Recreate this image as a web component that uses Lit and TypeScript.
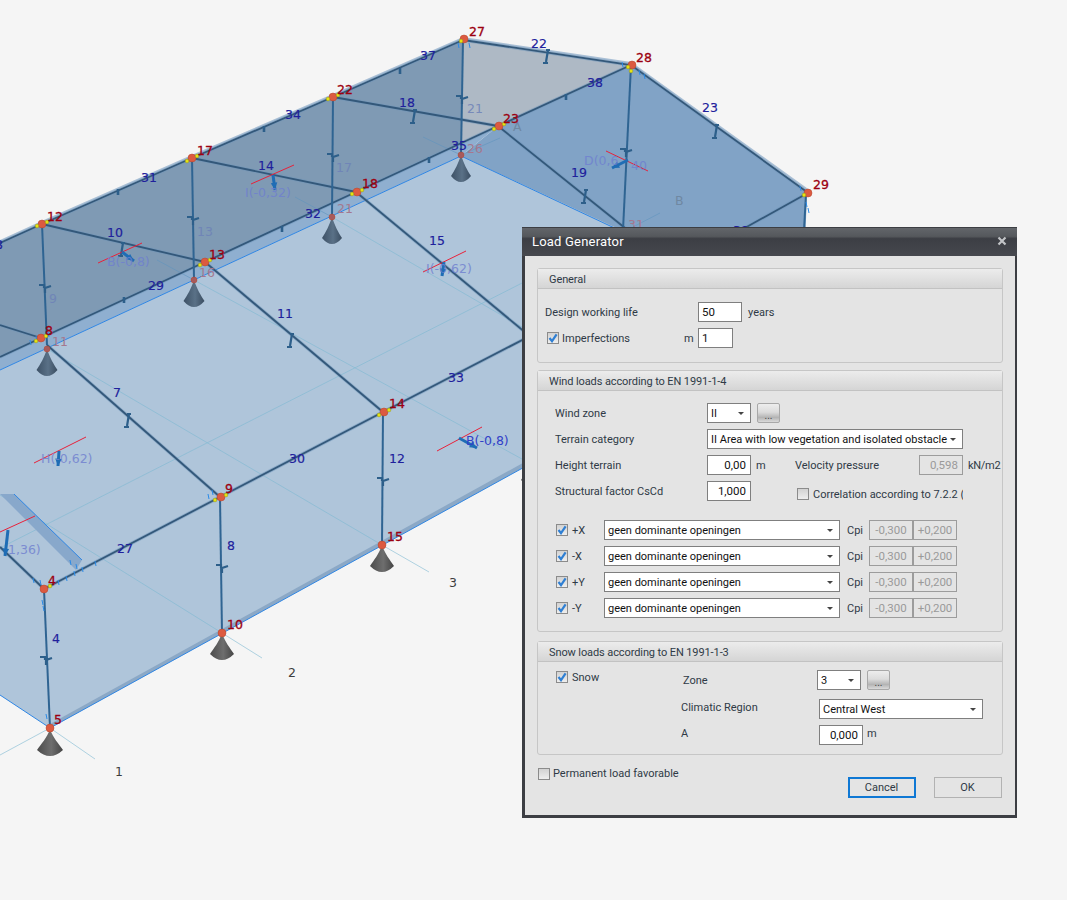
import { LitElement, css, html, svg } from "lit";
import { customElement } from "lit/decorators.js";

type P = [number, number];
type Label = [string, number, number];

const line = (pts: P[]) => pts.map((p) => p.join(",")).join(" ");

const gridLines: P[][] = [
  [[0, 755], [50, 728], [95, 759]],
  [[0, 495], [222, 633], [262, 658]],
  [[47, 349], [382, 545], [429, 572]],
  [[194, 280], [522, 459]],
  [[332, 217], [522, 327]],
  [[0, 548], [530, 279]],
];
const wallGrid: P[][] = [
  [[423, 137], [461, 155], [500, 138]],
  [[295, 197], [332, 217]],
  [[157, 260], [194, 280]],
  [[660, 213], [633, 227]],
];

const beams: P[][] = [
  [[463, 40], [333, 97], [192, 158], [42, 224], [0, 243]],
  [[0, 357], [41, 338], [205, 262], [356, 192], [498, 126], [631, 65]],
  [[42, 224], [205, 262]],
  [[192, 158], [356, 192]],
  [[333, 97], [498, 126]],
  [[463, 40], [631, 65], [807, 192]],
  [[47, 345], [220, 497]],
  [[205, 262], [383, 412]],
  [[356, 192], [532, 338]],
  [[498, 126], [630, 232]],
  [[0, 325], [41, 338]],
  [[0, 547], [44, 589]],
  [[44, 589], [220, 497], [383, 412], [530, 336]],
  [[806, 194], [743, 229]],
];

const columns: P[][] = [
  [[42, 224], [47, 345]],
  [[192, 158], [194, 280]],
  [[333, 97], [332, 217]],
  [[463, 40], [461, 155]],
  [[631, 65], [623, 230]],
  [[806, 194], [804, 230]],
  [[44, 589], [50, 728]],
  [[220, 497], [222, 633]],
  [[383, 412], [382, 545]],
];

const flatMarks: P[] = [[45, 287], [193, 219], [333, 156], [462, 98], [626, 151], [46, 659], [222, 567], [383, 480]];
const uprightMarks: P[] = [[122, 250], [291, 341], [128, 421], [414, 117], [547, 57], [716, 132], [585, 197]];
const smallMarks: P[] = [[124, 300], [264, 129], [400, 71], [282, 229], [429, 160], [118, 192], [566, 97]];

const loads: { red: [P, P]; from: P; to: P }[] = [
  { red: [[98, 263], [142, 243]], from: [122, 252], to: [134, 261] },
  { red: [[251, 184], [294, 165]], from: [273, 175], to: [275, 190] },
  { red: [[423, 272], [466, 251]], from: [444, 262], to: [442, 276] },
  { red: [[34, 463], [86, 437]], from: [59, 451], to: [58, 466] },
  { red: [[437, 451], [482, 427]], from: [459, 438], to: [477, 448] },
  { red: [[606, 151], [648, 171]], from: [628, 160], to: [612, 168] },
  { red: [[0, 532], [35, 516]], from: [8, 530], to: [5, 556] },
];

const supports: { at: P; tone: string; hw: number }[] = [
  { at: [50, 729], tone: "gray", hw: 13 },
  { at: [222, 633], tone: "gray", hw: 12 },
  { at: [382, 545], tone: "gray", hw: 12 },
  { at: [533, 459], tone: "gray", hw: 12 },
  { at: [47, 349], tone: "slate", hw: 10.5 },
  { at: [194, 280], tone: "slate", hw: 10.5 },
  { at: [332, 217], tone: "slate", hw: 10 },
  { at: [461, 155], tone: "slate", hw: 10 },
];

const nodes: { at: P; dots: P[] }[] = [
  { at: [464, 39], dots: [[461, 41]] },
  { at: [632, 65], dots: [[628, 67], [631, 71]] },
  { at: [808, 193], dots: [[804, 195]] },
  { at: [333, 97], dots: [[328, 99], [338, 95]] },
  { at: [499, 126], dots: [[494, 129], [504, 124]] },
  { at: [192, 158], dots: [[187, 161], [197, 156]] },
  { at: [357, 192], dots: [[352, 194], [362, 190]] },
  { at: [42, 224], dots: [[37, 226], [47, 222]] },
  { at: [205, 262], dots: [[200, 265], [210, 260]] },
  { at: [41, 338], dots: [[36, 341], [46, 336]] },
  { at: [384, 412], dots: [[379, 415], [389, 410]] },
  { at: [221, 497], dots: [[215, 500], [226, 495]] },
  { at: [44, 589], dots: [[50, 586]] },
  { at: [50, 728], dots: [] },
  { at: [222, 633], dots: [] },
  { at: [382, 545], dots: [] },
];

const hatches: P[] = [[30, 340], [36, 336], [48, 332], [33, 578], [40, 580], [58, 580], [66, 576], [74, 571], [82, 567], [95, 561], [70, 560], [76, 564], [42, 600], [43, 606], [46, 714], [212, 490], [208, 494], [458, 43], [469, 43], [622, 62], [639, 70], [644, 74], [800, 186], [806, 202], [808, 208]];

const nodeLabels: Label[] = [
  ["27", 469, 36], ["28", 636, 62], ["29", 813, 189], ["22", 337, 94], ["23", 503, 123], ["17", 197, 155],
  ["18", 362, 188], ["12", 47, 221], ["13", 209, 259], ["8", 45, 335], ["14", 389, 408], ["9", 225, 493],
  ["4", 48, 585], ["5", 54, 724], ["10", 227, 629], ["15", 387, 541],
];
const memberLabels: Label[] = [
  ["37", 420, 60], ["22", 531, 48], ["38", 587, 87], ["23", 702, 112], ["18", 399, 107], ["34", 285, 119],
  ["31", 141, 182], ["14", 258, 170], ["10", 107, 237], ["29", 148, 290], ["19", 571, 177], ["35", 451, 150],
  ["32", 305, 218], ["15", 429, 245], ["11", 277, 318], ["33", 448, 382], ["7", 113, 397], ["30", 289, 463],
  ["12", 389, 463], ["27", 117, 553], ["8", 227, 550], ["4", 52, 643], ["39", 733, 235], ["28", -13, 249],
];
const fadedLabels: Label[] = [["21", 467, 113], ["17", 336, 172], ["13", 197, 236], ["9", 49, 303]];
const pinkLabels: Label[] = [["26", 467, 153], ["21", 337, 213], ["16", 199, 277], ["11", 52, 346], ["31", 628, 229]];
const loadLabels: Label[] = [
  ["B(-0,8)", 107, 266], ["I(-0,32)", 245, 197], ["I(-0,62)", 426, 273], ["H(-0,62)", 41, 463],
  ["D(0,6", 584, 165], ["40", 631, 170], ["1,36)", 8, 554],
];
const axisLabels: Label[] = [["1", 115, 776], ["2", 288, 677], ["3", 449, 587]];
const planeLabels: Label[] = [["A", 513, 131], ["B", 675, 205]];

const texts = (items: Label[], cls: string) =>
  items.map(([t, x, y]) => svg`<text class=${cls} x=${x} y=${y}>${t}</text>`);

const openingRows = ["+X", "-X", "+Y", "-Y"];

@customElement("app-root")
export class AppRoot extends LitElement {
  arrowHead(from: P, to: P) {
    const a = Math.atan2(to[1] - from[1], to[0] - from[0]);
    const side = (d: number) => `${to[0] - 8 * Math.cos(a + d)},${to[1] - 8 * Math.sin(a + d)}`;
    return svg`<polygon fill="#1f6db5" points="${to.join(",")} ${side(0.42)} ${side(-0.42)}" />`;
  }

  renderModel() {
    return svg`
      <svg class="model" width="1067" height="900" viewBox="0 0 1067 900">
        <defs>
          <linearGradient id="gray" x1="0" x2="1" y1="0" y2="0">
            <stop offset="0" stop-color="#4b4b4b" />
            <stop offset="0.55" stop-color="#6e6e6e" />
            <stop offset="1" stop-color="#444" />
          </linearGradient>
          <linearGradient id="slate" x1="0" x2="1" y1="0" y2="0">
            <stop offset="0" stop-color="#3d5166" />
            <stop offset="0.55" stop-color="#5a7187" />
            <stop offset="1" stop-color="#3a4d61" />
          </linearGradient>
        </defs>

        <polygon fill="#afc5da" points="0,370 461,156 800,312 50,728 0,695" />
        ${gridLines.map((g) => svg`<polyline class="grid" points=${line(g)} />`)}
        <polygon fill="#8ba8c6" points="50,724 530,459 530,464 50,728" />
        <polyline class="edge" points="50,728 530,464" />
        <polyline class="edge" points="0,695 50,728" />

        <polygon fill="#81a3c6" points="631,65 807,192 803,300 612,226 461,156 498,126" />
        <polygon fill="#aeb9c5" points="463,40 631,65 498,126 461,144" />
        <polygon fill="#7f9ab4" points="0,243 42,224 192,158 333,97 463,40 461,144 0,357" />
        <polygon fill="#8fafd0" points="0,357 498,126 461,156 0,370" />
        <polyline class="edge" points="0,370 461,156 640,240" />
        <polyline class="rim" points="0,241 42,222 192,156 333,95 463,38 631,63 808,190" />
        ${wallGrid.map((g) => svg`<polyline class="grid dim" points=${line(g)} />`)}

        <polygon fill="#88a8cb" points="0,494 14,494 82,560 76,570" />
        <polyline class="edge" points="14,494 82,560" />

        ${beams.map((b) => svg`<polyline class="halo" points=${line(b)} />`)}
        ${beams.map((b) => svg`<polyline class="beam" points=${line(b)} />`)}
        ${columns.map((b) => svg`<polyline class="column" points=${line(b)} />`)}

        ${flatMarks.map(([x, y]) => svg`<path class="mark" d="M${x - 6} ${y - 2}h5v3M${x + 6} ${y - 1}l-6 2v5" />`)}
        ${uprightMarks.map(([x, y]) => svg`<path class="mark" d="M${x - 1} ${y - 7}h4M${x + 1} ${y - 7}l-2 12M${x - 4} ${y + 6}h5" />`)}
        ${smallMarks.map(([x, y]) => svg`<path class="mark thin" d="M${x} ${y - 3}v6" />`)}
        ${hatches.map(([x, y]) => svg`<path class="hatch" d="M${x} ${y}l1 5" />`)}

        ${supports.map(({ at: [x, y], tone, hw }) => svg`
          <path fill="url(#${tone})" d="M${x} ${y}C${x + 3} ${y + 9} ${x + hw - 4} ${y + 15} ${x + hw} ${y + 21}Q${x} ${y + 33} ${x - hw} ${y + 21}C${x - hw + 4} ${y + 15} ${x - 3} ${y + 9} ${x} ${y}Z" />
          <circle class=${tone === "gray" ? "node" : "node muted"} cx=${x} cy=${y} r="3" />
        `)}

        ${loads.map((l) => svg`
          <polyline class="red" points=${line(l.red)} />
          <line class="arrow" x1=${l.from[0]} y1=${l.from[1]} x2=${l.to[0]} y2=${l.to[1]} />
          ${this.arrowHead(l.from, l.to)}
        `)}

        ${nodes.map((n) => svg`
          <circle class="node" cx=${n.at[0]} cy=${n.at[1]} r="4" />
          ${n.dots.map(([x, y]) => svg`<circle class="dot" cx=${x} cy=${y} r="1.9" />`)}
        `)}

        ${texts(planeLabels, "t plane")}
        ${texts(fadedLabels, "t faded")}
        ${texts(pinkLabels, "t pink")}
        ${texts(loadLabels, "t load")}
        <text class="t load strong" x="466" y="445">B(-0,8)</text>
        ${texts(memberLabels, "t member")}
        ${texts(nodeLabels, "t nodeno")}
        ${texts(axisLabels, "t axis")}
      </svg>
    `;
  }

  check(on: boolean) {
    return html`<span class="check">
      ${on
        ? svg`<svg width="10" height="10" viewBox="0 0 10 10"><path d="M1.5 5l2.5 3.2L8.6 1.4" fill="none" stroke="#2f7fd3" stroke-width="2.2" /></svg>`
        : ""}
    </span>`;
  }

  select(text: string, cls: string) {
    return html`<div class="combo ${cls}">
      <span class="combo-text">${text}</span><span class="caret"></span>
    </div>`;
  }

  field(value: string, cls: string, disabled = false) {
    return html`<input class="field ${cls}" .value=${value} ?disabled=${disabled} />`;
  }

  renderDialog() {
    return html`
      <section class="dialog">
        <header class="titlebar">
          <span class="title">Load Generator</span>
          <svg class="close" width="10" height="10" viewBox="0 0 10 10">
            <path d="M1.5 1.5l7 7M8.5 1.5l-7 7" stroke="#c2c4c7" stroke-width="2.2" />
          </svg>
        </header>
        <div class="body">
          <div class="group">
            <div class="group-head">General</div>
            <div class="general">
              <div class="row">
                <label class="w153">Design working life</label>
                ${this.field("50", "w44 left")}
                <span class="unit-years">years</span>
              </div>
              <div class="row">
                <span class="check-gap">${this.check(true)}</span>
                <label class="w122">Imperfections</label>
                <label class="w14">m</label>
                ${this.field("1", "w35 left")}
              </div>
            </div>
          </div>

          <div class="group wind">
            <div class="group-head">Wind loads according to EN 1991-1-4</div>
            <div class="wind-body">
              <div class="row">
                <label class="w152">Wind zone</label>
                ${this.select("II", "w44")}
                <button class="dots">...</button>
              </div>
              <div class="row">
                <label class="w152">Terrain category</label>
                ${this.select("II Area with low vegetation and isolated obstacle", "w256")}
              </div>
              <div class="row">
                <label class="w152">Height terrain</label>
                ${this.field("0,00", "w44")}
                <span class="unit-m">m</span>
                <label class="velocity">Velocity pressure</label>
                ${this.field("0,598", "w44", true)}
                <span class="unit-kn">kN/m2</span>
              </div>
              <div class="row">
                <label class="w152">Structural factor CsCd</label>
                ${this.field("1,000", "w44")}
                <div class="corr">
                  ${this.check(false)}
                  <span class="corr-text">Correlation according to 7.2.2 (</span>
                </div>
              </div>
              <div class="openings">
                ${openingRows.map(
                  (r) => html`
                    <div class="row">
                      <span class="opening-check">${this.check(true)}<label>${r}</label></span>
                      ${this.select("geen dominante openingen", "w236")}
                      <label class="cpi">Cpi</label>
                      ${this.field("-0,300", "w44 center", true)}
                      ${this.field("+0,200", "w44 center gap6", true)}
                    </div>
                  `
                )}
              </div>
            </div>
          </div>

          <div class="group snow">
            <div class="group-head">Snow loads according to EN 1991-1-3</div>
            <div class="snow-body">
              <div class="row">
                <span class="snow-check">${this.check(true)}<label>Snow</label></span>
                <label class="zone">Zone</label>
                ${this.select("3", "w44")}
                <button class="dots">...</button>
              </div>
              <div class="row">
                <label class="w138 raised">Climatic Region</label>
                ${this.select("Central West", "w164")}
              </div>
              <div class="row">
                <label class="w138 raised">A</label>
                ${this.field("0,000", "w44")}
                <span class="unit-a">m</span>
              </div>
            </div>
          </div>

          <footer class="foot">
            <span class="perm">${this.check(false)}<label>Permanent load favorable</label></span>
            <div class="actions">
              <button class="btn focus">Cancel</button>
              <button class="btn">OK</button>
            </div>
          </footer>
        </div>
      </section>
    `;
  }

  render() {
    return html`${this.renderModel()}${this.renderDialog()}`;
  }

  static styles = css`
    :host {
      display: block;
      position: relative;
      width: 1067px;
      height: 900px;
      overflow: hidden;
      background: #f5f5f5;
      font-family: Roboto, "Liberation Sans", sans-serif;
      font-size: 11px;
      color: #2f3a46;
    }

    .model {
      position: absolute;
      inset: 0;
    }
    .grid {
      fill: none;
      stroke: #7db8d2;
      stroke-width: 0.8;
      opacity: 0.75;
    }
    .grid.dim {
      stroke: #5f93bd;
    }
    .edge {
      fill: none;
      stroke: #2f86e4;
      stroke-width: 1;
    }
    .rim {
      fill: none;
      stroke: #a9bfd5;
      stroke-width: 2;
    }
    .halo {
      fill: none;
      stroke: #6f95b9;
      stroke-width: 3.4;
      opacity: 0.55;
    }
    .beam {
      fill: none;
      stroke: #33587a;
      stroke-width: 1.8;
    }
    .column {
      fill: none;
      stroke: #2f6492;
      stroke-width: 2;
    }
    .mark {
      fill: none;
      stroke: #2d5f8a;
      stroke-width: 2.2;
    }
    .mark.thin {
      stroke-width: 2.6;
    }
    .hatch {
      stroke: #2a8be8;
      stroke-width: 1;
    }
    .red {
      fill: none;
      stroke: #e8213a;
      stroke-width: 1;
    }
    .arrow {
      stroke: #1f6db5;
      stroke-width: 3;
    }
    .node {
      fill: #dc5a40;
      stroke: #b5472f;
      stroke-width: 0.5;
    }
    .node.muted {
      fill: #a85a5c;
    }
    .dot {
      fill: #e6e312;
      stroke: #7d7d20;
      stroke-width: 0.4;
    }
    .t {
      font-family: "DejaVu Sans", sans-serif;
      font-size: 12.5px;
    }
    .nodeno {
      fill: #9c0010;
      stroke: #9c0010;
      stroke-width: 0.3;
    }
    .member {
      fill: #20209c;
      stroke: #20209c;
      stroke-width: 0.15;
    }
    .faded {
      fill: #6e82b8;
      opacity: 0.85;
    }
    .pink {
      fill: #a4788f;
    }
    .load {
      fill: #6f7fd0;
      opacity: 0.8;
    }
    .load.strong {
      fill: #3140c8;
      opacity: 1;
    }
    .plane {
      fill: #6f88a2;
    }
    .axis {
      fill: #3d3d3d;
    }

    .dialog {
      position: absolute;
      left: 522px;
      top: 227px;
      width: 495px;
      height: 591px;
      box-sizing: border-box;
      display: flex;
      flex-direction: column;
      background: #3c3e43;
      padding: 1px 2.5px 3px 3px;
    }
    .titlebar {
      box-sizing: border-box;
      height: 28px;
      display: flex;
      align-items: center;
      justify-content: space-between;
      padding: 0 10px 2px 10px;
      margin: 0 -2.5px 0 -3px;
      background: linear-gradient(#62656a 0, #55585c 30%, #3c3e44 38%, #46484e 100%);
      flex: none;
    }
    .title {
      color: #fff;
      font-size: 13px;
      letter-spacing: 0.2px;
    }
    .body {
      flex: 1;
      background: #e4e4e4;
      padding: 12px 12px 0 12px;
    }
    .group {
      border: 1px solid #c6c6c6;
      border-radius: 3px;
      box-sizing: border-box;
    }
    .group-head {
      height: 20px;
      line-height: 21px;
      box-sizing: border-box;
      padding-left: 11px;
      letter-spacing: -0.1px;
      background: linear-gradient(#ececec, #d5d5d5);
      border-bottom: 1px solid #c2c2c2;
    }
    .row {
      display: flex;
      align-items: center;
      height: 20px;
    }
    .general {
      height: 73px;
      box-sizing: border-box;
      padding: 13px 0 0 7px;
      display: flex;
      flex-direction: column;
      gap: 6px;
    }
    .wind {
      margin-top: 7px;
      height: 262px;
    }
    .wind-body {
      padding: 12px 0 0 17px;
      display: flex;
      flex-direction: column;
      gap: 6px;
    }
    .openings {
      margin-top: 13px;
      display: flex;
      flex-direction: column;
      gap: 6px;
    }
    .snow {
      margin-top: 9px;
      height: 114px;
    }
    .snow-body {
      padding: 8px 0 0 18px;
      display: flex;
      flex-direction: column;
    }
    .snow-body .row + .row {
      margin-top: 9px;
      padding-left: 125px;
    }
    .snow-body .row + .row + .row {
      margin-top: 6px;
    }
    .raised { margin-top: -4px; }
    .w153 { width: 153px; }
    .w152 { width: 152px; }
    .w122 { width: 122px; }
    .w138 { width: 138px; }
    .w14 { width: 14px; }
    .w35 { width: 35px; }
    .w44 { width: 44px; }
    .w164 { width: 164px; }
    .w236 { width: 236px; }
    .w256 { width: 256px; }
    .check-gap {
      display: inline-flex;
      width: 15px;
      margin-left: 2px;
    }
    .unit-years { margin-left: 6px; }
    .unit-m { margin-left: 5px; width: 39px; }
    .unit-kn { margin-left: 5px; letter-spacing: -0.3px; }
    .unit-a { margin-left: 4px; margin-top: -4px; }
    .velocity { width: 124px; }
    .corr {
      display: flex;
      align-items: center;
      gap: 4px;
      margin: 6px 0 0 46px;
      width: 166px;
      overflow: hidden;
      white-space: nowrap;
    }
    .corr-text { white-space: nowrap; }
    .check {
      display: inline-flex;
      align-items: center;
      justify-content: center;
      box-sizing: border-box;
      flex: none;
      width: 12px;
      height: 12px;
      border: 1px solid #8b8b8b;
      background: linear-gradient(#d2d2d2, #eeeeee);
    }
    .opening-check {
      display: flex;
      align-items: center;
      gap: 4px;
      width: 48px;
      margin-left: 1px;
    }
    .snow-check {
      display: flex;
      align-items: center;
      gap: 4px;
      width: 127px;
      margin: -6px 0 0 0;
    }
    .zone {
      width: 134px;
    }
    .cpi {
      margin-left: 7px;
      width: 22px;
    }
    .gap6 {
      margin-left: 6px;
    }
    .field {
      box-sizing: border-box;
      height: 20px;
      border: 1px solid #7f7f7f;
      border-radius: 0;
      background: #fff;
      color: #111;
      font: inherit;
      font-size: 11.5px;
      padding: 0 4px;
      margin: 0;
      text-align: right;
      outline: none;
    }
    .field.left { text-align: left; padding-left: 3px; }
    .field.center { text-align: center; padding: 0; }
    .field:disabled {
      background: transparent;
      border-color: #9c9c9c;
      color: #9a9a9a;
    }
    .combo {
      box-sizing: border-box;
      height: 20px;
      display: flex;
      align-items: center;
      justify-content: space-between;
      border: 1px solid #7f7f7f;
      background: #fff;
      color: #111;
      font-size: 11px;
      padding: 0 6px 0 3px;
    }
    .combo-text {
      white-space: nowrap;
    }
    .caret {
      width: 0;
      height: 0;
      border-left: 3px solid transparent;
      border-right: 3px solid transparent;
      border-top: 3px solid #444;
      flex: none;
    }
    .dots {
      box-sizing: border-box;
      width: 23px;
      height: 20px;
      margin: 0 0 0 6px;
      padding: 0;
      border: 1px solid #a8a8a8;
      border-radius: 2px;
      background: linear-gradient(#ededed 0, #dcdcdc 45%, #b4b4b4 75%, #dadada 100%);
      font: inherit;
      font-size: 10px;
      line-height: 24px;
      color: #444;
    }
    .foot {
      display: flex;
      justify-content: space-between;
      align-items: flex-start;
      margin: 12px 1px 0 1px;
    }
    .perm {
      display: flex;
      align-items: center;
      gap: 3px;
    }
    .actions {
      display: flex;
      gap: 18px;
      margin-top: 10px;
    }
    .btn {
      box-sizing: border-box;
      width: 68px;
      height: 21px;
      padding: 0;
      border: 1px solid #b2b2b2;
      background: #e4e4e4;
      font: inherit;
      color: #2f3a46;
    }
    .btn.focus {
      border: 2px solid #0f78d4;
    }
  `;
}

declare global {
  interface HTMLElementTagNameMap {
    "app-root": AppRoot;
  }
}
